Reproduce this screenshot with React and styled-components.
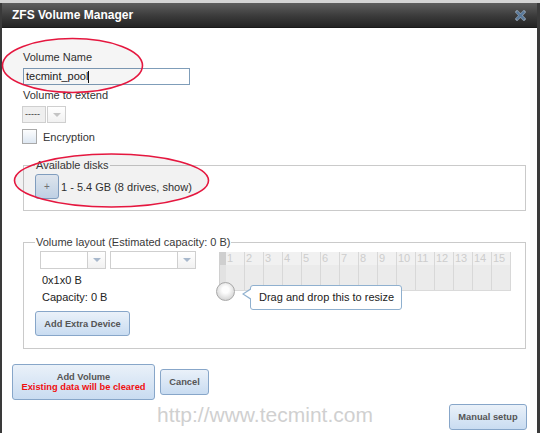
import React from "react";
import styled, { createGlobalStyle } from "styled-components";

const Global = createGlobalStyle`
  html, body {
    margin: 0;
    padding: 0;
    background: #d4d4d4;
  }
  * {
    box-sizing: border-box;
  }
`;

const Page = styled.div`
  position: relative;
  width: 540px;
  height: 433px;
  padding-top: 3px;
  background: #d4d4d4;
  font-family: "Liberation Sans", Arial, sans-serif;
  font-size: 11px;
  color: #333;
  overflow: hidden;
`;

const Dialog = styled.div`
  height: 430px;
  display: flex;
  flex-direction: column;
  background: #fff;
  border-left: 2px solid #3a3a3a;
  border-right: 3px solid #3a3a3a;
`;

const TitleBar = styled.div`
  height: 25px;
  flex-shrink: 0;
  display: flex;
  align-items: center;
  justify-content: space-between;
  padding: 0 11px 0 10px;
  background: linear-gradient(#5e5e5e, #3a3a3a 55%, #242424);
  border-bottom: 1px solid #1a1a1a;
  color: #fff;
  font-size: 12px;
  font-weight: bold;
`;

const Body = styled.div`
  flex: 1;
  display: flex;
  flex-direction: column;
  padding: 22px 10px 0 10px;
`;

const Form = styled.div`
  display: flex;
  flex-direction: column;
  align-items: flex-start;
  padding-left: 11px;
`;

const Label = styled.div`
  line-height: 14px;
  color: #333;
  margin-top: ${(p) => p.$top || 0}px;
`;

const TextInput = styled.div`
  margin-top: 4px;
  width: 167px;
  height: 17px;
  border: 1px solid #7f9db9;
  padding-left: 2px;
  line-height: 15px;
  color: #222;
  display: flex;
  align-items: center;
`;

const Caret = styled.span`
  display: inline-block;
  width: 1px;
  height: 12px;
  background: #111;
`;

const Select = styled.div`
  display: flex;
  height: ${(p) => p.$h || 17}px;
  margin-top: ${(p) => p.$top || 0}px;
  margin-left: ${(p) => p.$left || 0}px;
`;

const SelectText = styled.div`
  width: ${(p) => p.$w}px;
  border: 1px solid #cfcfcf;
  background: ${(p) => (p.$grey ? "#efefef" : "#fff")};
  font-size: 9px;
  line-height: 14px;
  padding-left: 2px;
  color: #333;
`;

const SelectArrow = styled.div`
  width: ${(p) => p.$w || 19}px;
  border: 1px solid #cfcfcf;
  border-left: ${(p) => (p.$joined ? "none" : "1px solid #cfcfcf")};
  margin-left: ${(p) => (p.$joined ? 0 : 1)}px;
  background: linear-gradient(#fff, #f1f1f1);
  display: flex;
  align-items: center;
  justify-content: center;
  &::after {
    content: "";
    border-left: 4px solid transparent;
    border-right: 4px solid transparent;
    border-top: 4px solid ${(p) => (p.$joined ? "#a8b8cc" : "#c4c4c4")};
  }
`;

const CheckRow = styled.div`
  margin-top: 6px;
  display: flex;
  align-items: center;
  gap: 6px;
  margin-left: -1px;
`;

const CheckBox = styled.div`
  width: 15px;
  height: 15px;
  border: 1px solid #a9a9a9;
  background: linear-gradient(#fdfdfd, #dde7f2);
`;

const Fieldset = styled.fieldset`
  width: 503px;
  margin: ${(p) => p.$top}px 0 0 0;
  padding: 0 11px ${(p) => p.$bottom}px 11px;
  border: 1px solid #cacaca;
  min-width: 0;
`;

const Legend = styled.legend`
  padding: 0 1px;
  line-height: 14px;
  color: #3a3a3a;
`;

const DiskRow = styled.div`
  margin-top: 2px;
  display: flex;
  align-items: center;
  gap: 2px;
  font-size: 11px;
  color: #333;
`;

const Button = styled.div`
  width: ${(p) => p.$w}px;
  height: ${(p) => p.$h}px;
  display: flex;
  flex-direction: column;
  align-items: center;
  justify-content: center;
  border: 1px solid #87a6c9;
  border-radius: 3px;
  background: linear-gradient(#eaf1f9, #c9dcf1);
  color: #555;
  font-weight: bold;
  font-size: ${(p) => p.$fs || 9.3}px;
  line-height: 10px;
  margin-top: ${(p) => p.$top || 0}px;
`;

const PlusSign = styled.span`
  font-weight: normal;
  color: #777;
`;

const Warning = styled.span`
  color: #f01010;
`;

const LayoutRow = styled.div`
  display: flex;
`;

const LeftColumn = styled.div`
  width: 184px;
  display: flex;
  flex-direction: column;
  align-items: flex-start;
`;

const Info = styled.div`
  margin: ${(p) => p.$top}px 0 0 7px;
  line-height: 14px;
  color: #222;
`;

const Grid = styled.div`
  position: relative;
  margin-top: 3px;
  height: 39px;
  display: flex;
  border-left: 1px solid #d0d0d0;
  border-bottom: 1px solid #dadada;
`;

const Handle = styled.div`
  width: 6px;
  background: linear-gradient(#cfcfcf 0 13px, #e2e2e2 13px);
`;

const Cell = styled.div`
  width: 19px;
  display: flex;
  flex-direction: column;
  border-right: 1px solid #d8d8d8;
  background: #ebebeb;
`;

const CellHead = styled.div`
  height: 13px;
  background: #f1f1f1;
  color: #cdcdcd;
  font-size: 11px;
  line-height: 12px;
  padding-left: 1px;
`;

const Knob = styled.div`
  position: absolute;
  left: -4px;
  top: 30px;
  width: 19px;
  height: 19px;
  border-radius: 50%;
  border: 1px solid #a8a8a8;
  background: radial-gradient(circle at 50% 40%, #fdfdfd 0 25%, #e2e2e2 60%, #c2c2c2);
`;

const Tooltip = styled.div`
  position: absolute;
  left: 30px;
  top: 33px;
  width: 152px;
  height: 25px;
  border: 1px solid #8fb0cf;
  border-radius: 3px;
  background: #fff;
  color: #222;
  line-height: 23px;
  padding-left: 8px;
  white-space: nowrap;
  &::before {
    content: "";
    position: absolute;
    left: -9px;
    top: 2px;
    border-top: 6px solid transparent;
    border-bottom: 6px solid transparent;
    border-right: 9px solid #8fb0cf;
  }
  &::after {
    content: "";
    position: absolute;
    left: -7px;
    top: 3px;
    border-top: 5px solid transparent;
    border-bottom: 5px solid transparent;
    border-right: 8px solid #fff;
  }
`;

const ActionRow = styled.div`
  margin-top: 15px;
  display: flex;
  align-items: center;
  gap: 5px;
`;

const Footer = styled.div`
  margin-top: 4px;
  display: flex;
  align-items: center;
  justify-content: space-between;
`;

const Watermark = styled.div`
  margin-left: 145px;
  font-size: 21px;
  line-height: 22px;
  color: #d0d0d0;
  margin-top: -4px;
`;

const Marks = styled.svg`
  position: absolute;
  left: 0;
  top: 0;
  pointer-events: none;
`;

const CloseIcon = () => (
  <svg width="11" height="11" viewBox="0 0 12 12">
    <path d="M2.2 2.2L9.8 9.8M9.8 2.2L2.2 9.8" stroke="#8a9aab" strokeWidth="3.6" strokeLinecap="square" />
    <path d="M2.6 2.6L9.4 9.4M9.4 2.6L2.6 9.4" stroke="#56779a" strokeWidth="2" strokeLinecap="square" />
  </svg>
);

const cols = Array.from({ length: 15 }, (_, i) => i + 1);

export default function App() {
  return (
    <Page>
      <Global />
      <Dialog>
        <TitleBar>
          <span>ZFS Volume Manager</span>
          <CloseIcon />
        </TitleBar>
        <Body>
          <Form>
            <Label>Volume Name</Label>
            <TextInput>
              tecmint_pool
              <Caret />
            </TextInput>
            <Label $top={3}>Volume to extend</Label>
            <Select $top={4} $left={-1}>
              <SelectText $w={24} $grey>
                -----
              </SelectText>
              <SelectArrow $w={19} />
            </Select>
            <CheckRow>
              <CheckBox />
              <span>Encryption</span>
            </CheckRow>

            <Fieldset $top={14} $bottom={11}>
              <Legend>Available disks</Legend>
              <DiskRow>
                <Button $w={24} $h={25} $fs={10}>
                  <PlusSign>+</PlusSign>
                </Button>
                <span>1 - 5.4 GB (8 drives, show)</span>
              </DiskRow>
            </Fieldset>

            <Fieldset $top={24} $bottom={12}>
              <Legend>Volume layout (Estimated capacity: 0 B)</Legend>
              <LayoutRow>
                <LeftColumn>
                  <Select $h={18} $top={2} $left={5}>
                    <SelectText $w={48} />
                    <SelectArrow $w={18} $joined />
                    <SelectText $w={68} style={{ marginLeft: 4 }} />
                    <SelectArrow $w={18} $joined />
                  </Select>
                  <Info $top={4}>0x1x0 B</Info>
                  <Info $top={3}>Capacity: 0 B</Info>
                  <Button $w={95} $h={25} $top={7}>
                    Add Extra Device
                  </Button>
                </LeftColumn>
                <div>
                  <Grid>
                    <Handle />
                    {cols.map((n) => (
                      <Cell key={n}>
                        <CellHead>{n}</CellHead>
                      </Cell>
                    ))}
                    <Knob />
                    <Tooltip>Drag and drop this to resize</Tooltip>
                  </Grid>
                </div>
              </LayoutRow>
            </Fieldset>
          </Form>

          <ActionRow>
            <Button $w={143} $h={36}>
              <span>Add Volume</span>
              <Warning>Existing data will be cleared</Warning>
            </Button>
            <Button $w={49} $h={26}>
              Cancel
            </Button>
          </ActionRow>

          <Footer>
            <Watermark>http://www.tecmint.com</Watermark>
            <Button $w={78} $h={26}>
              Manual setup
            </Button>
          </Footer>
        </Body>
      </Dialog>
      <Marks width="540" height="433">
        <ellipse cx="72.5" cy="65.5" rx="70" ry="27" fill="rgba(0,0,0,0.04)" stroke="#e5173f" strokeWidth="1.6" />
        <ellipse cx="111.5" cy="180.5" rx="97" ry="26.5" fill="rgba(0,0,0,0.05)" stroke="#e5173f" strokeWidth="1.6" />
      </Marks>
    </Page>
  );
}
